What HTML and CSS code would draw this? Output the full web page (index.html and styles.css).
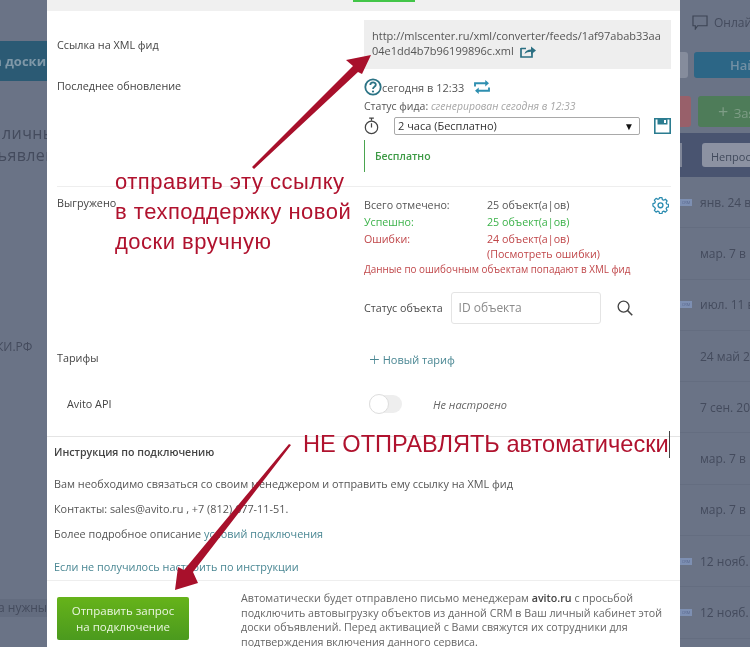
FILE: index.html
```html
<!DOCTYPE html>
<html lang="ru">
<head>
<meta charset="utf-8">
<title>Avito</title>
<link rel="stylesheet" href="styles.css">
</head>
<body>
<div class="page">
  <aside class="side side-left">
    <div class="left-band">а доски</div>
    <div class="left-text">личны</div>
    <div class="left-text second">ъявлен</div>
    <div class="left-rf">КИ.РФ</div>
    <div class="left-need">а нужны</div>
  </aside>

  <main class="modal">
    <div class="top-strip"><span class="green-tab"></span></div>

    <section class="row row-link">
      <div class="label">Ссылка на XML фид</div>
      <div class="feed-box">http://mlscenter.ru/xml/converter/feeds/1af97abab33aa04e1dd4b7b96199896c.xml
        <svg class="ico-share" viewBox="0 0 16 13"><path d="M1 3.500h5M1 3v9h11V8" fill="none" stroke="#2b6f82" stroke-width="1.700"/><path d="M4.500 9c.5-3 3-4.600 6.500-4.600V1.500L16 5.500l-5 4V6.800C8.500 6.800 6.300 7.500 4.500 9z" fill="#2b6f82"/></svg>
      </div>
    </section>

    <section class="row row-update">
      <div class="label">Последнее обновление</div>
      <div>
        <div class="updated">
          <svg class="ico-q" viewBox="0 0 18 18"><circle cx="9" cy="9" r="7.700" fill="none" stroke="#2b7385" stroke-width="1.800"/><path d="M6.300 7c0-3.300 5.500-3.400 5.500-.2 0 2-2.800 2-2.800 4.200" fill="none" stroke="#2b7385" stroke-width="1.800"/><circle cx="9" cy="13.500" r="1.100" fill="#2b7385"/></svg>
          <span>сегодня в 12:33</span>
          <svg class="ico-sync" viewBox="0 0 18 15"><path d="M1.500 7V3.500h12M3.500 11.500h13V8" fill="none" stroke="#2e8fb0" stroke-width="2"/><path d="M12.500 0l4 3.500-4 3.500zM5.500 8l-4 3.500 4 3.500z" fill="#2e8fb0"/></svg>
        </div>
        <div class="feed-status">Статус фида: <em>сгенерирован сегодня в 12:33</em></div>
        <div class="plan-line">
          <svg class="ico-timer" viewBox="0 0 16 19"><circle cx="8" cy="11" r="6.600" fill="none" stroke="#444" stroke-width="1.300"/><path d="M5.500 1h5M8 1v3M8 11V6.500" fill="none" stroke="#444" stroke-width="1.300"/></svg>
          <div class="select"><span>2 часа (Бесплатно)</span><i class="caret">▼</i></div>
          <svg class="ico-save" viewBox="0 0 17 16"><path d="M.8.800h15.400v14.400H.8z" fill="none" stroke="#2b7c90" stroke-width="1.600"/><path d="M3.500 1h10v5.500h-10z" fill="#2b7c90"/><path d="M10 2h2v3h-2z" fill="#fff"/></svg>
        </div>
        <div class="free-plan">Бесплатно</div>
      </div>
    </section>

    <section class="row row-export">
      <div class="label">Выгружено</div>
      <div class="export">
        <svg class="ico-gear" viewBox="0 0 18 18"><path d="M7.600 1h2.800l.4 2.100 1.500.7 1.900-1.100 1.900 2-1.100 1.800.6 1.500 2.100.5v2.800l-2.100.5-.6 1.500 1.100 1.800-1.900 2-1.900-1.100-1.500.7-.4 2.100H7.600l-.4-2.100-1.500-.7-1.900 1.100-1.900-2 1.100-1.800-.6-1.500L.3 10.300V7.500l2.100-.5.6-1.500-1.100-1.800 1.900-2 1.900 1.100 1.500-.7z" transform="translate(.7 -.2) scale(.95)" fill="none" stroke="#2b8cb0" stroke-width="1.400" stroke-linejoin="round"/><circle cx="9" cy="8.800" r="2.600" fill="none" stroke="#2b8cb0" stroke-width="1.400"/></svg>
        <div class="stats">
          <span>Всего отмечено:</span><span>25 объект(а|ов)</span>
          <span class="ok">Успешно:</span><span class="ok">25 объект(а|ов)</span>
          <span class="bad">Ошибки:</span><span class="bad">24 объект(а|ов)</span>
          <span></span><span class="bad">(Посмотреть ошибки)</span>
        </div>
        <div class="bad-note">Данные по ошибочным объектам попадают в XML фид</div>
        <div class="object-status">
          <span>Статус объекта</span>
          <div class="id-input">ID объекта</div>
          <svg class="ico-search" viewBox="0 0 17 17"><circle cx="7" cy="7" r="5.800" fill="none" stroke="#444" stroke-width="1.400"/><path d="M11.200 11.200l5 5" stroke="#444" stroke-width="1.700"/></svg>
        </div>
      </div>
    </section>

    <section class="row row-tariff">
      <div class="label">Тарифы</div>
      <div class="new-tariff"><span class="plus">+</span> Новый тариф</div>
    </section>

    <section class="row row-api">
      <div class="label api-label">Avito API</div>
      <div class="api-state"><span class="toggle"><b></b></span><em>Не настроено</em></div>
    </section>

    <section class="help">
      <h3>Инструкция по подключению</h3>
      <p class="help-first">Вам необходимо связаться со своим менеджером и отправить ему ссылку на XML фид</p>
      <p>Контакты: sales@avito.ru , +7 (812) 677-11-51.</p>
      <p>Более подробное описание <a>условий подключения</a></p>
      <p class="help-last"><a>Если не получилось настроить по инструкции</a></p>
    </section>

    <footer class="foot">
      <button class="send">Отправить запрос<br>на подключение</button>
      <p>Автоматически будет отправлено письмо менеджерам <b>avito.ru</b> с просьбой подключить автовыгрузку объектов из данной CRM в Ваш личный кабинет этой доски объявлений. Перед активацией с Вами свяжутся их сотрудники для подтверждения включения данного сервиса.</p>
    </footer>
  </main>

  <aside class="side side-right">
    <div class="online">
      <svg class="ico-chat" viewBox="0 0 17 16"><path d="M1 1h15v10.500H6L3.500 15v-3.500H1z" fill="none" stroke="#3c4454" stroke-width="1.200"/></svg>Онлайн
    </div>
    <div class="find-bar"><span class="find-input"></span><span class="find-btn">Найти</span></div>
    <div class="add-bar"><span class="red-btn"></span><span class="add-btn"><i>+</i> Заявка</span></div>
    <div class="dark-band"><span class="chip-a"></span><span class="chip-b">Непросм</span></div>
    <div class="date-row"><span class="crm">CRM</span>янв. 24 в</div>
    <div class="date-row"><span class="crm off"></span>мар. 7 в</div>
    <div class="date-row"><span class="crm">CRM</span>июл. 11 в</div>
    <div class="date-row"><span class="crm off"></span>24 май 2</div>
    <div class="date-row"><span class="crm off"></span>7 сен. 20</div>
    <div class="date-row"><span class="crm off"></span>мар. 7 в</div>
    <div class="date-row"><span class="crm off"></span>мар. 7 в</div>
    <div class="date-row"><span class="crm">CRM</span>12 нояб.</div>
    <div class="date-row"><span class="crm">CRM</span>12 нояб.</div>
  </aside>

  <svg class="arrows" viewBox="0 0 750 647">
    <path d="M371 55L346 60 353 66 252 167 254 169 358 72 362 74z" fill="#a8102b"/>
    <path d="M291 445L193 572 198 583 175 590 178 567 184 570 289 444z" fill="#a8102b"/>
  </svg>
  <div class="note note-send">отправить эту ссылку<br>в техподдержку новой<br>доски вручную</div>
  <div class="note note-stop">НЕ ОТПРАВЛЯТЬ автоматически</div>
</div>
</body>
</html>
```

FILE: styles.css
```css
* { box-sizing: border-box; }
html, body { margin: 0; padding: 0; }
body { width: 750px; height: 647px; overflow: hidden; font-family: "Open Sans", sans-serif; font-size: 11px; color: #4a4a4a; background: #6a7386; }
.page { position: relative; display: flex; width: 750px; height: 647px; overflow: hidden; filter: blur(.35px); }

/* dimmed page behind the dialog */
.side { flex: none; overflow: hidden; background: #6a7386; color: #444b5d; white-space: nowrap; }
.side-left { width: 47px; padding-top: 41px; }
.side-right { width: 70px; }
.left-band { height: 40px; background: #2b5a74; color: #7f98a8; font-weight: 700; font-size: 13px; line-height: 40px; text-indent: -6px; }
.left-text { margin-top: 42px; padding-left: 2px; font-size: 16px; line-height: 20px; letter-spacing: .4px; }
.left-text.second { margin-top: 2px; padding-left: 0; text-indent: -4px; }
.left-rf { margin-top: 173px; font-size: 12px; line-height: 18px; text-indent: -4px; }
.left-need { margin-top: 243px; font-size: 12px; line-height: 18px; text-indent: -2px; background: #636c7f; }

.online { display: flex; align-items: center; gap: 6px; height: 44px; padding-left: 12px; font-size: 12px; }
.ico-chat { flex: none; width: 16px; height: 15px; }
.find-bar { display: flex; height: 26px; margin-top: 8px; gap: 6px; }
.find-input { flex: none; width: 8px; background: #858c9c; border-radius: 0 3px 3px 0; }
.find-btn { flex: none; width: 60px; background: #2c6686; color: #7390a4; font-size: 13px; font-weight: 600; line-height: 26px; padding-left: 36px; border-radius: 3px 0 0 3px; }
.add-bar { display: flex; height: 31px; margin-top: 18px; gap: 7px; }
.red-btn { flex: none; width: 11px; background: #98606a; border-radius: 0 3px 3px 0; }
.add-btn { flex: none; width: 54px; background: #4e7c59; color: #7e9d86; font-size: 13px; line-height: 31px; padding-left: 20px; border-radius: 3px 0 0 3px; }
.add-btn i { font-style: normal; font-size: 18px; margin-right: 2px; }
.dark-band { display: flex; height: 44px; margin-top: 6px; padding: 10px 0; gap: 20px; background: #495470; }
.chip-a { flex: none; width: 2px; background: #7f8698; }
.chip-b { flex: none; width: 50px; background: #8c92a2; border-radius: 3px 0 0 3px; color: #414a5c; line-height: 28px; padding-left: 9px; }
.date-row { display: flex; align-items: center; height: 51.300px; border-bottom: 1px solid #646d80; font-size: 12px; color: #444b5d; }
.crm { flex: none; width: 12px; height: 7px; margin-right: 8px; background: #7d8fb2; color: #5a6a90; font-size: 4px; line-height: 7px; text-align: center; }
.crm.off { background: none; color: transparent; }

/* dialog */
.modal { flex: none; display: flex; flex-direction: column; width: 633px; height: 647px; background: #fff; }
.top-strip { flex: none; position: relative; height: 11px; background: #f0f0f0; }
.green-tab { display: block; width: 62px; height: 2px; margin-left: 306px; background: #42c548; }
.row { display: grid; flex: none; grid-template-columns: 307px 307px; padding: 0 9px 0 10px; }
.label { color: #444; font-size: 10.800px; line-height: 16px; }
.row-link { padding-top: 9px; align-items: center; }
.feed-box { height: 49px; padding: 8px 7px 0 8px; background: #eee; color: #555; font-size: 11px; line-height: 15px; word-break: break-all; }
.ico-share { width: 16px; height: 13px; vertical-align: -3px; margin-left: 3px; }
.row-update { padding-top: 9px; height: 117px; }
.updated { display: flex; align-items: center; height: 18px; color: #555; }
.ico-q { flex: none; width: 18px; height: 18px; }
.ico-sync { flex: none; width: 18px; height: 14px; margin-left: 9px; }
.feed-status { margin-top: 3px; line-height: 15px; font-size: 10.500px; color: #555; }
.feed-status em { color: #a5a5a5; font-size: 10.400px; }
.plan-line { display: flex; align-items: center; height: 18px; margin-top: 3px; }
.ico-timer { flex: none; width: 15px; height: 18px; }
.select { flex: none; position: relative; width: 246px; height: 18px; margin-left: 15px; padding-left: 3px; border: 1px solid #a9a9a9; border-radius: 2px; line-height: 16px; color: #333; }
.caret { position: absolute; right: 5px; top: 0; font-style: normal; font-size: 10px; color: #111; }
.ico-save { flex: none; width: 17px; height: 16px; margin-left: 14px; }
.free-plan { height: 32px; margin-top: 5px; padding-left: 10px; border-left: 1.500px solid #4aa44f; color: #3d9a45; font-weight: 600; font-size: 10.500px; line-height: 32px; }
.row-export { position: relative; height: 152px; }
.row-export::before { content: ""; position: absolute; left: 10px; right: 9px; top: 0; height: 1px; background: #eee; }
.row-export .label { margin-top: 9px; }
.export { position: relative; padding-top: 10px; }
.ico-gear { position: absolute; right: 2px; top: 11px; width: 17px; height: 17px; }
.stats { display: grid; grid-template-columns: 123px 1fr; grid-template-rows: 18px 16.500px 16px 15px; align-items: center; color: #555; font-size: 10.700px; }
.ok { color: #3cb24a; }
.bad { color: #c0474a; }
.bad-note { line-height: 14px; font-size: 9.900px; color: #c0474a; white-space: nowrap; }
.object-status { display: flex; align-items: center; height: 32px; margin-top: 16px; font-size: 10.700px; }
.id-input { flex: none; width: 150px; height: 32px; margin-left: 8px; padding-left: 7px; border: 1px solid #e4e4e4; border-radius: 3px; color: #8a8a8a; font-size: 12px; line-height: 30px; }
.ico-search { flex: none; width: 16px; height: 16px; margin-left: 16px; }
.row-tariff { height: 42px; padding-top: 12px; }
.new-tariff { padding-left: 5px; margin-top: 2px; color: #4a8793; font-size: 11px; line-height: 16px; }
.plus { font-size: 19px; font-weight: 300; line-height: 14px; vertical-align: -2px; }
.row-api { height: 56px; align-items: center; padding-bottom: 8px; }
.api-label { padding-left: 10px; }
.api-state { display: flex; align-items: center; padding-left: 5px; }
.toggle { flex: none; position: relative; width: 33px; height: 18px; background: #eee; border-radius: 9px; }
.toggle b { position: absolute; left: 0; top: -1px; width: 20px; height: 20px; border: 1px solid #ddd; border-radius: 50%; background: #fff; }
.api-state em { margin-left: 31px; color: #666; font-size: 11px; }
.help { flex: none; height: 145px; padding: 7px 0 0 7px; border-top: 1px solid #e4e4e4; border-bottom: 1px solid #eee; }
.help h3 { margin: 0; font-size: 10.600px; line-height: 16px; font-weight: 600; color: #444; }
.help p { margin: 16px 0 0; font-size: 10.870px; line-height: 9px; color: #555; }
.help p.help-first { margin-top: 19px; }
.help p.help-last { margin-top: 23.500px; }
.help a { color: #4a8793; }
.foot { flex: 1; display: flex; align-items: flex-start; padding: 16px 0 0 10px; }
.send { flex: none; width: 132px; height: 43px; padding: 0; border: 0; border-radius: 2px; background: linear-gradient(#66b31a, #4b9a1e); color: #eaf6e0; font-family: "Open Sans", sans-serif; font-size: 11.500px; line-height: 16px; }
.foot p { flex: none; margin: -6px 0 0 52px; width: 432px; font-size: 10.700px; line-height: 14.700px; color: #666; }
.foot b { font-weight: 600; color: #444; }

/* annotations over the screenshot */
.arrows { position: absolute; left: 0; top: 0; width: 750px; height: 647px; pointer-events: none; }
.note { position: absolute; font-family: "Liberation Sans", sans-serif; color: #b0122e; white-space: nowrap; }
.note-send { left: 115px; top: 167px; font-size: 22px; line-height: 30px; letter-spacing: .5px; }
.note-stop { left: 303px; top: 431px; height: 27px; font-size: 23.600px; line-height: 27px; border-right: 1px solid #444; }
```
